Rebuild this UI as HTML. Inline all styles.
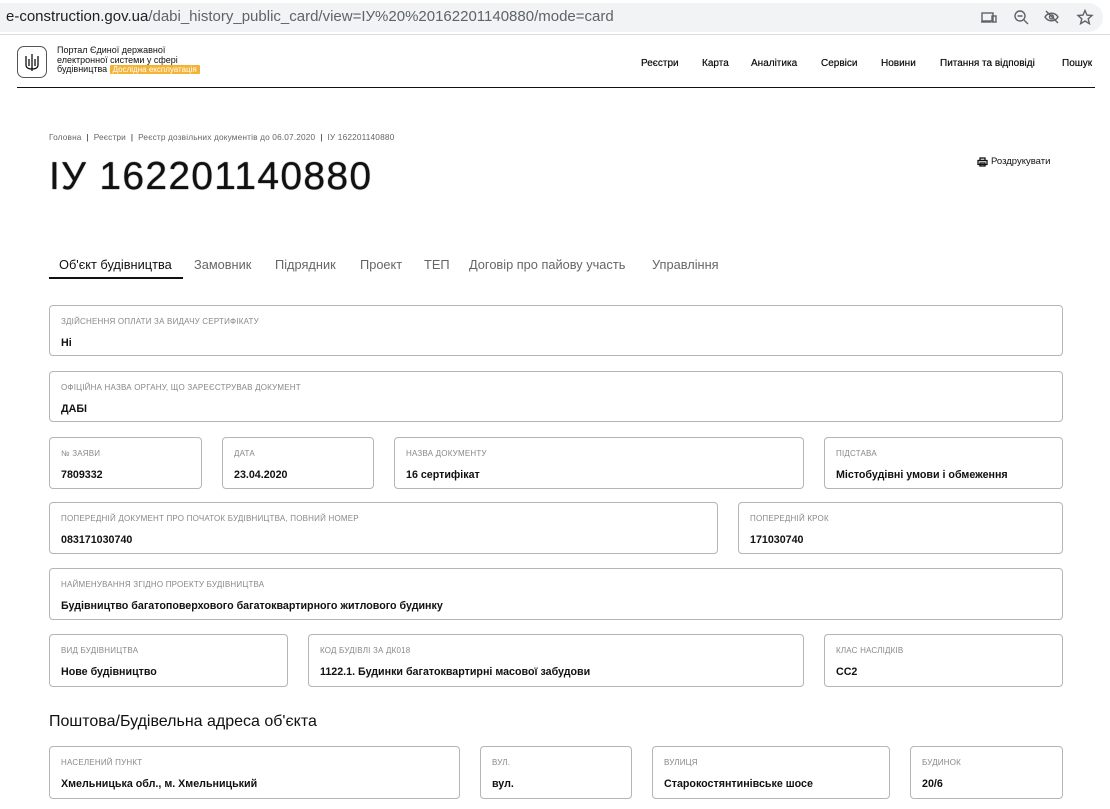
<!DOCTYPE html>
<html><head><meta charset="utf-8"><style>
*{margin:0;padding:0;box-sizing:border-box}
body{width:1110px;height:809px;overflow:hidden;background:#fff;font-family:"Liberation Sans",Arial,sans-serif;color:#111;position:relative}
.a{position:absolute;white-space:nowrap}
.urlbar{position:absolute;left:-20px;top:3px;width:1123px;height:29px;background:#f1f3f4;border-radius:15px}
.sep{position:absolute;left:0;top:34px;width:1110px;height:1px;background:#dadce0}
.box{position:absolute;border:1px solid #b5b5b5;border-radius:4px}
.box .l{position:absolute;left:11px;top:11px;font-size:8px;color:#888;text-transform:uppercase;letter-spacing:.2px;white-space:nowrap}
.box .v{position:absolute;left:11px;top:31px;font-size:10.7px;font-weight:bold;color:#111;white-space:nowrap}
.nav{font-size:10px;top:58px;color:#111;text-shadow:0 0 .4px #111}
.tab{top:257px;font-size:12.8px;color:#666}
</style></head><body>
<div class="urlbar"></div>
<div class="a" style="left:6px;top:8px;font-size:15px;color:#202124">e-construction.gov.ua<span style="color:#5f6368">/dabi_history_public_card/view=ІУ%20%20162201140880/mode=card</span></div>
<svg class="a" style="left:980px;top:9px" width="115" height="18" viewBox="0 0 115 18" fill="none" stroke="#5f6368" stroke-width="1.4">
<rect x="2" y="4" width="11" height="8"/><path d="M1 13h10"/><rect x="12" y="7" width="4" height="6"/>
<circle cx="40" cy="7" r="5"/><path d="M37.5 7h5M44 11l4 4"/>
<path d="M65 8c3-5 10-5 13 0c-3 5-10 5-13 0z"/><circle cx="71.5" cy="8" r="2"/><path d="M66 2l12 12"/>
<path d="M105 1.5l2 4.6 5 .4-3.8 3.3 1.2 4.9-4.4-2.7-4.4 2.7 1.2-4.9-3.8-3.3 5-.4z"/>
</svg>
<div class="sep"></div>
<div class="a" style="left:17px;top:46px;width:30px;height:32px;border:1px solid #555;border-radius:7px"></div>
<svg class="a" style="left:24px;top:53px" width="16" height="19" viewBox="0 0 16 19" fill="none" stroke="#111" stroke-width="1.3"><path d="M8 1v14M2 3v9c0 3 3 4 6 4s6-1 6-4V3M5 6v7M11 6v7M8 15v3"/></svg>
<div class="a" style="left:57px;top:46px;font-size:9px;line-height:9.5px;color:#111">Портал Єдиної державної<br>електронної системи у сфері<br>будівництва <span style="background:#f5b335;color:#fff;padding:0 3px;font-size:8px;border-radius:1px">Дослідна експлуатація</span></div>
<div class="a nav" style="left:641px">Реєстри</div>
<div class="a nav" style="left:702px">Карта</div>
<div class="a nav" style="left:751px">Аналітика</div>
<div class="a nav" style="left:821px">Сервіси</div>
<div class="a nav" style="left:881px">Новини</div>
<div class="a nav" style="left:940px">Питання та відповіді</div>
<div class="a nav" style="left:1062px">Пошук</div>
<div class="a" style="left:17px;top:87px;width:1078px;height:1px;background:#111"></div>
<div class="a" style="left:49px;top:132px;font-size:8.3px;color:#666;letter-spacing:.15px">Головна &nbsp;<span style="color:#111">|</span>&nbsp; Реєстри &nbsp;<span style="color:#111">|</span>&nbsp; Реєстр дозвільних документів до 06.07.2020 &nbsp;<span style="color:#111">|</span>&nbsp; ІУ 162201140880</div>
<div class="a" style="left:49px;top:155px;font-size:39px;color:#111;letter-spacing:1.3px;text-shadow:0 0 1px #111">ІУ 162201140880</div>
<svg class="a" style="left:977px;top:157px" width="11" height="10" viewBox="0 0 11 10" fill="none" stroke="#111" stroke-width="1.3"><rect x="3" y="1" width="5" height="2.5"/><rect x="1" y="3.5" width="9" height="4"/><rect x="3" y="6" width="5" height="3"/></svg>
<div class="a" style="left:991px;top:156px;font-size:9.5px">Роздрукувати</div>
<div class="a tab" style="left:59px;color:#111">Об'єкт будівництва</div>
<div class="a tab" style="left:194px">Замовник</div>
<div class="a tab" style="left:275px">Підрядник</div>
<div class="a tab" style="left:360px">Проект</div>
<div class="a tab" style="left:424px">ТЕП</div>
<div class="a tab" style="left:469px">Договір про пайову участь</div>
<div class="a tab" style="left:652px">Управління</div>
<div class="a" style="left:49px;top:277px;width:134px;height:2px;background:#111"></div>

<div class="box" style="left:49px;top:305px;width:1014px;height:51px"><div class="l">Здійснення оплати за видачу сертифікату</div><div class="v">Ні</div></div>
<div class="box" style="left:49px;top:371px;width:1014px;height:51px"><div class="l">Офіційна назва органу, що зареєстрував документ</div><div class="v">ДАБІ</div></div>
<div class="box" style="left:49px;top:437px;width:153px;height:52px"><div class="l">№ заяви</div><div class="v">7809332</div></div>
<div class="box" style="left:222px;top:437px;width:152px;height:52px"><div class="l">Дата</div><div class="v">23.04.2020</div></div>
<div class="box" style="left:394px;top:437px;width:410px;height:52px"><div class="l">Назва документу</div><div class="v">16 сертифікат</div></div>
<div class="box" style="left:824px;top:437px;width:239px;height:52px"><div class="l">Підстава</div><div class="v">Містобудівні умови і обмеження</div></div>
<div class="box" style="left:49px;top:502px;width:669px;height:52px"><div class="l">Попередній документ про початок будівництва, повний номер</div><div class="v">083171030740</div></div>
<div class="box" style="left:738px;top:502px;width:325px;height:52px"><div class="l">Попередній крок</div><div class="v">171030740</div></div>
<div class="box" style="left:49px;top:568px;width:1014px;height:52px"><div class="l">Найменування згідно проекту будівництва</div><div class="v">Будівництво багатоповерхового багатоквартирного житлового будинку</div></div>
<div class="box" style="left:49px;top:634px;width:239px;height:53px"><div class="l">Вид будівництва</div><div class="v">Нове будівництво</div></div>
<div class="box" style="left:308px;top:634px;width:496px;height:53px"><div class="l">Код будівлі за ДК018</div><div class="v">1122.1. Будинки багатоквартирні масової забудови</div></div>
<div class="box" style="left:824px;top:634px;width:239px;height:53px"><div class="l">Клас наслідків</div><div class="v">СС2</div></div>
<div class="a" style="left:49px;top:713px;font-size:16px;color:#111">Поштова/Будівельна адреса об'єкта</div>
<div class="box" style="left:49px;top:746px;width:411px;height:53px"><div class="l">Населений пункт</div><div class="v">Хмельницька обл., м. Хмельницький</div></div>
<div class="box" style="left:480px;top:746px;width:152px;height:53px"><div class="l">Вул.</div><div class="v">вул.</div></div>
<div class="box" style="left:652px;top:746px;width:238px;height:53px"><div class="l">Вулиця</div><div class="v">Старокостянтинівське шосе</div></div>
<div class="box" style="left:910px;top:746px;width:153px;height:53px"><div class="l">Будинок</div><div class="v">20/6</div></div>
</body></html>
